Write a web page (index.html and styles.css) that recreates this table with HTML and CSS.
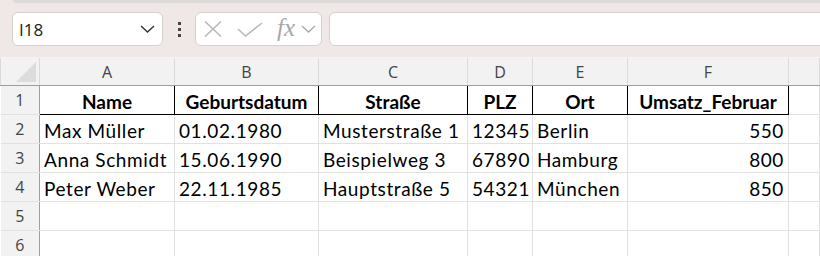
FILE: index.html
```html
<!DOCTYPE html>
<html lang="de">
<head>
    <meta charset="UTF-8">
    <meta name="viewport" content="width=device-width, initial-scale=1.0">
    <title>Mappe1</title>
    <link rel="stylesheet" href="styles.css">
</head>
<body>
    <div class="formulaBar">
        <div class="ribbonEdge"></div>
        <div class="barRow">
            <div class="nameBox">
                <span class="cellRef">I18</span>
                <svg class="chevron" width="15" height="8" viewBox="0 0 15 8">
                    <path d="M1 1 L7.5 7 L14 1" fill="none" stroke="#333" stroke-width="1.4"/>
                </svg>
            </div>
            <div class="grip">
                <span></span><span></span><span></span>
            </div>
            <div class="fxBox">
                <svg class="cancel" width="18" height="16" viewBox="0 0 18 16">
                    <path d="M1 0.5 L17 15.5 M17 0.5 L1 15.5" stroke="#b8b8b8" stroke-width="1.5" fill="none"/>
                </svg>
                <svg class="enter" width="26" height="15" viewBox="0 0 26 15">
                    <path d="M1 7 L8.5 14 L25 1" stroke="#b8b8b8" stroke-width="1.5" fill="none"/>
                </svg>
                <span class="fx">fx</span>
                <svg class="fxMenu" width="15" height="8" viewBox="0 0 15 8">
                    <path d="M1 1 L7.5 7 L14 1" fill="none" stroke="#a8a8a8" stroke-width="1.3"/>
                </svg>
            </div>
            <div class="formulaInput"></div>
        </div>
    </div>

    <table class="sheet">
        <colgroup>
            <col style="width: 39px">
            <col style="width: 135px">
            <col style="width: 144px">
            <col style="width: 149px">
            <col style="width: 65px">
            <col style="width: 95px">
            <col style="width: 161px">
            <col>
        </colgroup>
        <thead>
            <tr class="colHeads">
                <th class="corner"><div class="triangle"></div></th>
                <th>A</th><th>B</th><th>C</th><th>D</th><th>E</th><th>F</th><th></th>
            </tr>
        </thead>
        <tbody>
            <tr class="titleRow">
                <th class="rowNum">1</th>
                <td>Name</td>
                <td>Geburtsdatum</td>
                <td>Straße</td>
                <td>PLZ</td>
                <td>Ort</td>
                <td>Umsatz_Februar</td>
                <td class="free"></td>
            </tr>
            <tr>
                <th class="rowNum">2</th>
                <td>Max Müller</td>
                <td>01.02.1980</td>
                <td>Musterstraße 1</td>
                <td>12345</td>
                <td>Berlin</td>
                <td class="num">550</td>
                <td></td>
            </tr>
            <tr>
                <th class="rowNum">3</th>
                <td>Anna Schmidt</td>
                <td>15.06.1990</td>
                <td>Beispielweg 3</td>
                <td>67890</td>
                <td>Hamburg</td>
                <td class="num">800</td>
                <td></td>
            </tr>
            <tr>
                <th class="rowNum">4</th>
                <td>Peter Weber</td>
                <td>22.11.1985</td>
                <td>Hauptstraße 5</td>
                <td>54321</td>
                <td>München</td>
                <td class="num">850</td>
                <td></td>
            </tr>
            <tr>
                <th class="rowNum">5</th>
                <td></td><td></td><td></td><td></td><td></td><td></td><td></td>
            </tr>
            <tr>
                <th class="rowNum">6</th>
                <td></td><td></td><td></td><td></td><td></td><td></td><td></td>
            </tr>
        </tbody>
    </table>
</body>
</html>
```

FILE: styles.css
```css
body {
    margin: 0;
    width: 820px;
    height: 256px;
    overflow: hidden;
    background: #ffffff;
    font-family: Lato, "Liberation Sans", sans-serif;
}

/* formula bar */
.formulaBar {
    position: relative;
    height: 57px;
    background: #efe8e6;
    border-bottom: 1px solid #f4f2f2;
}

.ribbonEdge {
    position: absolute;
    left: 13px;
    right: 0;
    top: 0;
    height: 3px;
    background: #dedad9;
    border-bottom-left-radius: 3px;
}

.barRow {
    display: flex;
    align-items: center;
    padding: 12px 0 0 12px;
}

.nameBox {
    display: flex;
    align-items: center;
    justify-content: space-between;
    box-sizing: border-box;
    width: 151px;
    height: 34px;
    padding: 0 7px 0 6px;
    background: #ffffff;
    border: 1px solid #d4d0cf;
    border-radius: 6px;
}

.cellRef {
    font-family: "Open Sans", sans-serif;
    font-size: 17px;
    color: #222;
}

.grip {
    display: flex;
    flex-direction: column;
    gap: 3px;
    margin: 0 14px 0 15px;
}

.grip span {
    width: 3px;
    height: 3px;
    background: #444;
}

.fxBox {
    display: flex;
    align-items: center;
    box-sizing: border-box;
    width: 127px;
    height: 34px;
    padding: 0 0 0 8px;
    background: #ffffff;
    border: 1px solid #d4d0cf;
    border-radius: 6px;
}

.cancel {
    margin-right: 15px;
}

.enter {
    margin-right: 14px;
}

.fx {
    font-family: "Liberation Serif", serif;
    font-style: italic;
    font-size: 25px;
    line-height: 1;
    color: #a8a8a8;
    margin-top: -4px;
    margin-right: 6px;
}

.formulaInput {
    flex: 1;
    height: 34px;
    box-sizing: border-box;
    margin-left: 7px;
    margin-right: -12px;
    background: #ffffff;
    border: 1px solid #d4d0cf;
    border-radius: 6px;
}

/* worksheet */
.sheet {
    table-layout: fixed;
    width: 100%;
    border-collapse: collapse;
}

.sheet td,
.sheet th {
    padding: 0 4px;
    height: 28px;
    white-space: nowrap;
    overflow: hidden;
    border: 1px solid #e1e1e1;
}

.sheet td {
    font-size: 19px;
    letter-spacing: 0.6px;
    color: #000;
    vertical-align: bottom;
    padding-bottom: 1px;
    box-sizing: border-box;
}

.colHeads th {
    height: 27px;
    background: #f2f2f2;
    font-family: "Open Sans", sans-serif;
    font-weight: normal;
    font-size: 16px;
    color: #444;
    border-top: none;
    border-bottom: 1px solid #9e9e9e;
    border-left: 1px solid #dadada;
    border-right: 1px solid #dadada;
}

.corner {
    position: relative;
}

.triangle {
    position: absolute;
    right: 3px;
    bottom: 3px;
    width: 0;
    height: 0;
    border-left: 20px solid transparent;
    border-bottom: 20px solid #dcdcdc;
}

.rowNum {
    background: #f2f2f2;
    font-family: "Open Sans", sans-serif;
    font-weight: normal;
    font-size: 16px;
    color: #444;
    text-align: center;
    border-right: 1px solid #9e9e9e !important;
    border-left: none !important;
}

.titleRow td {
    font-weight: bold;
    letter-spacing: 0;
    text-align: center;
    border: 1px solid #000;
}

.titleRow td.free {
    border: 1px solid #e1e1e1;
    border-left: 1px solid #000;
}

.num {
    text-align: right;
}
```
